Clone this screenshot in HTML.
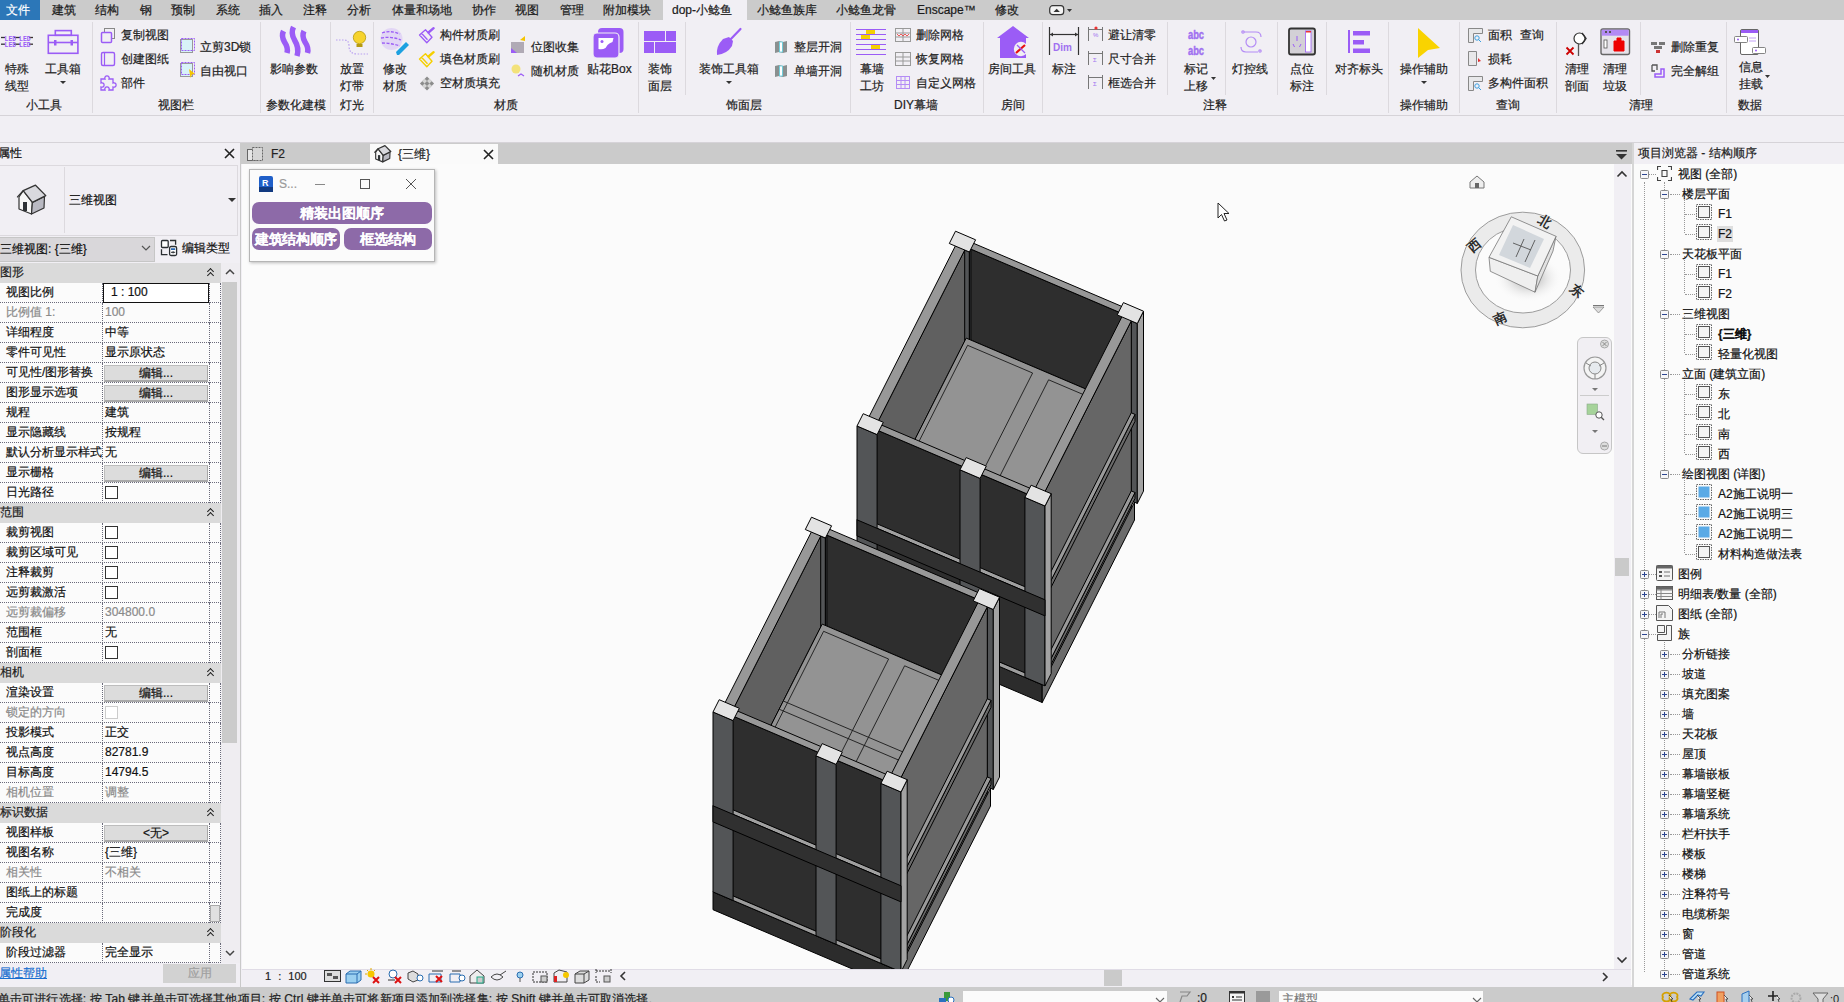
<!DOCTYPE html>
<html><head><meta charset="utf-8">
<style>
*{margin:0;padding:0;box-sizing:border-box}
html,body{width:1844px;height:1002px;overflow:hidden;background:#f1eff4;font-family:"Liberation Sans",sans-serif;font-size:12px;color:#111;-webkit-text-stroke:0.2px currentColor}
.a{position:absolute;white-space:nowrap}
#tabs{position:absolute;left:0;top:0;width:1844px;height:20px;background:#cbcbcb}
#tabs .t{position:absolute;top:0;height:20px;line-height:20px;font-size:12px;color:#1a1a1a}
#ribbon{position:absolute;left:0;top:20px;width:1844px;height:96px;background:#f1eff4}
.sep{position:absolute;top:2px;width:1px;height:91px;background:#dcd9de}
.gl{position:absolute;top:77px;height:16px;line-height:16px;font-size:12px;color:#222;white-space:nowrap}
.lb{position:absolute;font-size:12px;color:#222;white-space:nowrap;line-height:16px}

.ph{position:absolute;left:0;width:221px;height:20px;background:#dadada;line-height:19px;font-size:12px;color:#222;padding-left:0;white-space:nowrap}
.ph .cc{position:absolute;left:207px;top:5px;width:7px;height:10px}
.ph .cc:before,.ph .cc:after{content:"";position:absolute;left:1px;width:4px;height:4px;border-left:1.5px solid #222;border-top:1.5px solid #222;transform:rotate(45deg)}
.ph .cc:before{top:1px}.ph .cc:after{top:5px}
.pr{position:absolute;left:0;width:221px;height:20px;background:#fbfbfb;font-size:12px;color:#111;white-space:nowrap;border-bottom:1px dotted #6a6a7a}
.pr:after{content:"";position:absolute;left:102px;top:0;width:106px;height:20px;border-left:1px dotted #6a6a7a;border-right:1px dotted #6a6a7a}
.pr:before{content:"";position:absolute;left:220px;top:0;height:20px;border-left:1px dotted #6a6a7a}
.pn{position:absolute;left:6px;top:0;line-height:19px}
.pv{position:absolute;left:105px;top:0;line-height:19px}
.pbox{position:absolute;left:103px;top:0;width:106px;height:20px;border:1.5px solid #111;background:#fff;line-height:17px;padding-left:7px;z-index:2}
.pbtn{position:absolute;left:104px;top:2px;width:104px;height:17px;background:#dcdcdc;border:1px solid #bdbdbd;border-right-color:#a8a8a8;border-bottom:2px solid #a8a8a8;text-align:center;line-height:15px;z-index:2}
.pcb{position:absolute;left:105px;top:3px;width:13px;height:13px;border:1px solid #333;background:#fff;z-index:2}
.psm{position:absolute;left:210px;top:2px;width:10px;height:17px;background:#e0e0e0;border:1px solid #aaa;z-index:2}

.tb{position:absolute;width:9px;height:9px;border:1px solid #8a8a8a;background:#f6f6f8;border-radius:1.5px}
.tb .h{position:absolute;left:1px;top:3px;width:5px;height:1.3px;background:#2c4690}
.tb .v{position:absolute;left:3px;top:1px;width:1.3px;height:5px;background:#2c4690}
.dh{position:absolute;height:1px;border-top:1px dotted #999}
.dv{position:absolute;width:1px;border-left:1px dotted #999}
.tt{position:absolute;line-height:16px;font-size:12px;color:#111;white-space:nowrap}
.dbtn{background:#8d6aa8;border-radius:7px;color:#fff;font-weight:bold;font-size:14px;text-align:center;line-height:22px;overflow:hidden;-webkit-text-stroke:0.05px #fff}
</style></head><body>
<div id="tabs">
 <div class="a" style="left:0;top:0;width:40px;height:20px;background:#2c77b8"></div>
 <div class="t" style="left:6px;color:#fff">文件</div>
 <div class="t" style="left:52px">建筑</div>
 <div class="t" style="left:95px">结构</div>
 <div class="t" style="left:140px">钢</div>
 <div class="t" style="left:171px">预制</div>
 <div class="t" style="left:216px">系统</div>
 <div class="t" style="left:259px">插入</div>
 <div class="t" style="left:303px">注释</div>
 <div class="t" style="left:347px">分析</div>
 <div class="t" style="left:392px">体量和场地</div>
 <div class="t" style="left:472px">协作</div>
 <div class="t" style="left:515px">视图</div>
 <div class="t" style="left:560px">管理</div>
 <div class="t" style="left:603px">附加模块</div>
 <div class="a" style="left:663px;top:0;width:84px;height:20px;background:#f1eff4"></div>
 <div class="t" style="left:672px">dop-小鲶鱼</div>
 <div class="t" style="left:757px">小鲶鱼族库</div>
 <div class="t" style="left:836px">小鲶鱼龙骨</div>
 <div class="t" style="left:917px">Enscape™</div>
 <div class="t" style="left:995px">修改</div>
 <svg class="a" style="left:1049px;top:4px" width="24" height="12"><rect x="0.7" y="1.7" width="14" height="9" rx="3" fill="#f4f4f4" stroke="#333" stroke-width="1.2"/><path d="M4.5 8 l3.2 -3.2 l3.2 3.2z" fill="#333"/><path d="M18 5 h5 l-2.5 3z" fill="#333"/></svg>
</div>
<div id="ribbon"></div>
<svg class="a" style="left:0;top:0" width="1844" height="116" viewBox="0 0 1844 116">
<g fill="none" stroke="#9b5cf6" stroke-width="1.6">
 <!-- toolbox -->
 <rect x="48.3" y="35.3" width="29.6" height="18" />
 <rect x="55.3" y="30.6" width="16" height="4.7" />
 <line x1="48.3" y1="42.5" x2="77.9" y2="42.5"/>
</g>
<rect x="54" y="40" width="2.5" height="5.5" fill="#9b5cf6"/><rect x="70.5" y="40" width="2.5" height="5.5" fill="#9b5cf6"/>
<path d="M60 81 h6 l-3 3z" fill="#333"/>
<!-- LED lines -->
<g stroke="#333" stroke-width="1.3"><line x1="1" y1="37.5" x2="5" y2="37.5"/><line x1="14" y1="37.5" x2="20" y2="37.5"/><line x1="29" y1="37.5" x2="33" y2="37.5"/>
<line x1="1" y1="44.2" x2="5" y2="44.2"/><line x1="14" y1="44.2" x2="20" y2="44.2"/><line x1="29" y1="44.2" x2="33" y2="44.2"/></g>
<g font-family="Liberation Mono" font-size="6.5" fill="#9b5cf6" font-weight="bold"><text x="4.5" y="40.5">LED</text><text x="19" y="40.5">LED</text><text x="4.5" y="47.3">LED</text><text x="19" y="47.3">LED</text></g>
<!-- copy view -->
<rect x="104.5" y="28.5" width="10" height="10" fill="none" stroke="#888" stroke-width="1"/>
<rect x="101.5" y="32.5" width="10" height="10" rx="1" fill="#f1eff4" stroke="#9b5cf6" stroke-width="1.5"/>
<!-- sheet -->
<rect x="101.5" y="52.5" width="13" height="13" rx="1.5" fill="none" stroke="#9b5cf6" stroke-width="1.4"/>
<line x1="104.5" y1="52.5" x2="104.5" y2="65.5" stroke="#9b5cf6" stroke-width="1.2"/>
<!-- puzzle -->
<path d="M101 79 h4 a2.2 2.2 0 1 1 4 0 h4 v4 a2.2 2.2 0 1 1 0 4 v3 h-4 a2.2 2.2 0 1 0 -4 0 h-4 v-3 a2.2 2.2 0 1 0 0 -4z" fill="none" stroke="#9b5cf6" stroke-width="1.3"/>
<!-- 3d lock / free view -->
<rect x="180.5" y="39.5" width="12" height="13" fill="#d8f3f8" stroke="#999" stroke-width="1"/>
<rect x="181.5" y="38.5" width="13" height="12" fill="none" stroke="#9b5cf6" stroke-width="1" stroke-dasharray="2 1"/>
<rect x="180.5" y="63.5" width="12" height="13" fill="#d8f3f8" stroke="#999" stroke-width="1"/>
<rect x="181.5" y="62.5" width="13" height="12" fill="none" stroke="#9b5cf6" stroke-width="1" stroke-dasharray="2 1"/>
<path d="M189 69 l6 5 l-3 0.5 l-1.5 3.5z" fill="#f5c400"/>
<!-- steem S strokes -->
<g fill="none" stroke="#9b5cf6" stroke-width="5.5" stroke-linecap="butt">
<path d="M283.5 31 q-2.5 5 1 11 q4 6 2.5 11"/>
<path d="M293.5 27 q-3 6 1 13 q5 8 2.5 16"/>
<path d="M304 31 q-2.5 5 1 11 q4 6 2.5 11"/>
</g>
<!-- bulb -->
<path d="M336 40 h8 q5 0 5 6 q0 8 8 8 h11" fill="none" stroke="#b9a0f0" stroke-width="1.2" stroke-dasharray="1.5 1.5"/>
<circle cx="359.5" cy="37.5" r="6.2" fill="#f6d32d" stroke="#b59a10" stroke-width="0.8"/>
<rect x="356.5" y="44" width="6" height="3" fill="#b59a10"/>
<!-- material ball -->
<circle cx="391.5" cy="39" r="11" fill="#e2d6f5"/>
<g fill="none" stroke="#9b5cf6" stroke-width="1.3" stroke-dasharray="3 1.5"><path d="M382 33 q9 -3 18 1"/><path d="M381 38 q10 -2 20 2"/><path d="M382 43 q9 0 18 3"/></g>
<path d="M397 55 l-1 -3 l10 -10 l3 3 l-10 10z" fill="#1da1e0"/>
<!-- brushes -->
<g fill="none" stroke-linejoin="round">
<path d="M419.5 35 L425.5 29.8 L432 37.2 L426.8 42.8 Z M421.5 33.3 l6 6.5" stroke="#9b5cf6" stroke-width="1.3"/>
<path d="M428.5 32.5 L433.6 28.2" stroke="#9b5cf6" stroke-width="2.4" stroke-linecap="round"/>
<path d="M419.5 59 L425.5 53.8 L432 61.2 L426.8 66.8 Z M421.5 57.3 l6 6.5" stroke="#f5cf00" stroke-width="1.4"/>
<path d="M428.5 56.5 L433.6 52.2" stroke="#f5cf00" stroke-width="2.4" stroke-linecap="round"/>
</g>
<g transform="rotate(45 427 83.5)"><rect x="422" y="78.5" width="10" height="10" fill="#8c8c8c"/><rect x="425.3" y="78.5" width="3.4" height="3.3" fill="#d6d6d6"/><rect x="422" y="81.8" width="3.3" height="3.4" fill="#d6d6d6"/><rect x="428.7" y="81.8" width="3.3" height="3.4" fill="#d6d6d6"/><rect x="425.3" y="85.2" width="3.4" height="3.3" fill="#d6d6d6"/></g>
<!-- bitmap collect -->
<rect x="511" y="42" width="13" height="11" fill="#b0aab5"/><path d="M511 53 v-5 l6 5z" fill="#9b5cf6"/><path d="M520 40 l5 -4 v5z" fill="#f5c400"/>
<!-- random material -->
<circle cx="516" cy="69" r="4.5" fill="#f3e27a"/><path d="M518 76 l3 -2 l3 2" fill="none" stroke="#9b5cf6" stroke-width="1.2"/>
<!-- decal box -->
<rect x="598" y="28" width="25.5" height="25" rx="4" fill="#9b5cf6"/>
<rect x="593" y="33" width="26" height="25" rx="4" fill="#9b5cf6" stroke="#f1eff4" stroke-width="1.2"/>
<path d="M598.5 38 h15 l-1 4 q-3 1 -5 3 l-2 3 q-3 2 -7 1z" fill="#fff"/>
<circle cx="602" cy="41.5" r="1.5" fill="#9b5cf6"/>
<!-- bricks -->
<g fill="#9b5cf6"><rect x="644" y="31" width="21" height="10"/><rect x="666" y="31" width="10" height="10"/><rect x="644" y="42" width="10" height="11"/><rect x="655" y="42" width="21" height="11"/></g>
<!-- trowel -->
<path d="M717 55 q-1 -9 6 -16 l6 -2 l4 4 l-1 5 q-5 8 -15 9z" fill="#9b5cf6"/>
<line x1="728" y1="42" x2="740.5" y2="29" stroke="#9b5cf6" stroke-width="2.2" stroke-linecap="round"/>
<path d="M726 81 h6 l-3 3z" fill="#333"/>
<!-- openings -->
<g><path d="M775 42 l4 -1 l4 1 l4 -1 v11 l-4 1 l-4 -1 l-4 1z" fill="#8a9090"/><rect x="779.5" y="42" width="3" height="10" fill="#fff" stroke="#5fd0e0" stroke-width="0.8"/></g>
<g><path d="M775 66 l4 -1 l4 1 l4 -1 v11 l-4 1 l-4 -1 l-4 1z" fill="#8a9090"/><rect x="779.5" y="66" width="3" height="10" fill="#fff" stroke="#5fd0e0" stroke-width="0.8"/></g>
<!-- curtain wall workshop -->
<g stroke="#9b5cf6" stroke-width="1"><line x1="856" y1="29.5" x2="886" y2="29.5"/><line x1="856" y1="34.5" x2="886" y2="34.5"/><line x1="856" y1="39.5" x2="886" y2="39.5"/><line x1="856" y1="44.5" x2="886" y2="44.5"/><line x1="856" y1="49.5" x2="886" y2="49.5"/><line x1="856" y1="54.5" x2="886" y2="54.5"/></g>
<g fill="#f5d000"><rect x="866" y="30" width="9" height="4"/><rect x="861" y="35" width="9" height="4"/><rect x="871" y="45" width="9" height="4"/></g>
<!-- grid icons -->
<g fill="none" stroke="#999" stroke-width="1"><rect x="895.5" y="28.5" width="15" height="13"/><line x1="895.5" y1="33" x2="910.5" y2="33"/><line x1="895.5" y1="37" x2="910.5" y2="37"/><line x1="903" y1="28.5" x2="903" y2="41.5"/>
<rect x="895.5" y="52.5" width="15" height="13"/><line x1="895.5" y1="57" x2="910.5" y2="57"/><line x1="895.5" y1="61" x2="910.5" y2="61"/><line x1="903" y1="52.5" x2="903" y2="65.5"/></g>
<path d="M897 34 l2 2 l2 -2 l2 2 l2 -2 l2 2 l2 -2" fill="none" stroke="#e33" stroke-width="0.8"/>
<g fill="none" stroke="#b48cf5" stroke-width="1"><rect x="896.5" y="76.5" width="13" height="12"/><line x1="896.5" y1="80.5" x2="909.5" y2="80.5"/><line x1="896.5" y1="84.5" x2="909.5" y2="84.5"/><line x1="901" y1="76.5" x2="901" y2="88.5"/><line x1="905" y1="76.5" x2="905" y2="88.5"/></g>
<!-- room tool house -->
<path d="M1013 26 l16 12 h-3 v20 h-26 v-20 h-3z" fill="#9b5cf6"/>
<circle cx="1021" cy="49" r="7.2" fill="#f1eff4"/>
<path d="M1016 53 l9 -8" stroke="#e81010" stroke-width="2.2"/><path d="M1017 45 l8 8" stroke="#9b5cf6" stroke-width="1.2"/>
<!-- Dim -->
<g stroke="#333" stroke-width="1.2"><line x1="1049.5" y1="27" x2="1049.5" y2="55"/><line x1="1078.5" y1="27" x2="1078.5" y2="55"/><line x1="1050" y1="34.5" x2="1078" y2="34.5"/></g>
<path d="M1050 34.5 l3 -2 v4z M1078 34.5 l-3 -2 v4z" fill="#333"/>
<text x="1053" y="51" font-family="Liberation Sans" font-weight="bold" font-size="10" fill="#a070f0">Dim</text>
<!-- small dim icons -->
<g stroke="#777" stroke-width="1"><line x1="1088.5" y1="27" x2="1088.5" y2="41"/><line x1="1102.5" y1="27" x2="1102.5" y2="41"/><line x1="1088.5" y1="29.5" x2="1102.5" y2="29.5"/>
<line x1="1088.5" y1="51" x2="1088.5" y2="65"/><line x1="1102.5" y1="51" x2="1102.5" y2="65"/><line x1="1088.5" y1="53.5" x2="1102.5" y2="53.5"/>
<line x1="1088.5" y1="75" x2="1088.5" y2="89"/><line x1="1102.5" y1="75" x2="1102.5" y2="89"/><line x1="1088.5" y1="77.5" x2="1102.5" y2="77.5"/></g>
<circle cx="1096" cy="28" r="1.6" fill="#e33"/>
<g font-family="Liberation Sans" font-size="6" fill="#a070f0"><text x="1093" y="62">Σ</text><text x="1093" y="86">Σ</text><text x="1093" y="37">%</text></g>
<!-- abc abc -->
<g font-family="Liberation Sans" font-weight="bold" font-size="12" fill="#a070f0" stroke="#a070f0" stroke-width="0.4" transform="scale(0.78,1)"><text x="1523" y="39.5">abc</text><text x="1523" y="55.5">abc</text></g>
<path d="M1211 77 h5 l-2.5 3z" fill="#333"/>
<!-- light control -->
<g fill="none" stroke="#b48cf5" stroke-width="1.2"><circle cx="1251" cy="42" r="5"/><path d="M1244 32 h12 q5 0 5 5 M1258 52 h-12 q-5 0 -5 -5"/><circle cx="1243" cy="32" r="1.2"/><circle cx="1260" cy="51" r="1.2"/></g>
<!-- point label -->
<rect x="1289" y="28.5" width="26" height="26" rx="2" fill="#d3d0d6" stroke="#333" stroke-width="1.8"/>
<rect x="1305.5" y="31" width="5.5" height="21" fill="#fff" stroke="#9b5cf6" stroke-width="0.8"/><rect x="1306" y="31" width="5" height="1.5" fill="#e33"/>
<g stroke="#9b5cf6" stroke-width="1"><line x1="1297" y1="36" x2="1297" y2="41"/><line x1="1293" y1="44" x2="1294.5" y2="47"/><line x1="1301" y1="44" x2="1299.5" y2="47"/></g>
<!-- align heads -->
<rect x="1348" y="30" width="2" height="23" fill="#9b5cf6"/>
<g fill="#9b5cf6"><rect x="1353" y="31" width="17" height="4.5"/><rect x="1353" y="40" width="11" height="4.5"/><rect x="1353" y="48.5" width="17" height="4.5"/></g>
<!-- yellow arrow -->
<path d="M1418 28 l22 20 l-12 2 l-10 8z" fill="#f9d300"/>
<path d="M1421 81 h6 l-3 3z" fill="#333"/>
<!-- area query icons -->
<g fill="#e8e8ea" stroke="#888" stroke-width="1"><path d="M1468.5 28.5 h14 v5 h-9 v9 h-5z"/><path d="M1468.5 51.5 h8 v14 h-8z"/><path d="M1468.5 76.5 h14 v5 h-9 v9 h-5z"/></g>
<g fill="none" stroke="#3aa0e0" stroke-width="1"><circle cx="1477" cy="38" r="2.2"/><line x1="1478.5" y1="39.5" x2="1481" y2="42"/><circle cx="1477" cy="86" r="2.2"/><line x1="1478.5" y1="87.5" x2="1481" y2="90"/></g>
<path d="M1478 58 l3 3 l-3 1z" fill="#d33"/>
<!-- clean section -->
<circle cx="1579.5" cy="38.5" r="5.5" fill="#fff" stroke="#333" stroke-width="1.2"/>
<path d="M1582 33 l4 5.5 l-4 5.5" fill="none" stroke="#333" stroke-width="1.4"/>
<line x1="1578.5" y1="44" x2="1578.5" y2="56" stroke="#555" stroke-width="1.3"/>
<path d="M1566.5 47.5 l7 7 M1573.5 47.5 l-7 7" stroke="#c00" stroke-width="1.8"/>
<!-- clean garbage -->
<rect x="1601" y="29" width="28.5" height="25.5" rx="2" fill="#e6e3ea" stroke="#666" stroke-width="1.4"/>
<rect x="1601.7" y="29.7" width="27" height="6" fill="#b38af5"/>
<rect x="1605" y="31" width="2" height="2" fill="#555"/><rect x="1609" y="31" width="2" height="2" fill="#555"/>
<rect x="1604" y="40" width="3" height="8" fill="#fff" stroke="#555" stroke-width="0.8"/>
<path d="M1614 41 h10 v10 h-10z M1617 41 v-3 h4 v3" fill="#e00" stroke="#e00" stroke-width="1"/>
<!-- delete dup / ungroup -->
<g fill="#777"><rect x="1651" y="42" width="6" height="3"/><rect x="1659" y="42" width="6" height="3"/><rect x="1654" y="46" width="8" height="3"/></g><rect x="1656" y="50" width="4" height="3" fill="#c33"/>
<path d="M1652 65 h5 v5 M1652 65 v6 h3" fill="none" stroke="#555" stroke-width="1.3"/><path d="M1664 69 v8 h-9 v-3 h6 v-5z" fill="none" stroke="#9b5cf6" stroke-width="1.5"/>
<!-- info mount -->
<rect x="1740.5" y="29.5" width="18" height="25" rx="1.5" fill="#fff" stroke="#666" stroke-width="1"/>
<rect x="1741" y="30" width="17" height="3" fill="#9b5cf6"/>
<g stroke="#b48cf5" stroke-width="0.8"><line x1="1749" y1="38" x2="1756" y2="38"/><line x1="1749" y1="41" x2="1756" y2="41"/></g>
<rect x="1734.5" y="36.5" width="13" height="6" rx="1" fill="#fff" stroke="#777" stroke-width="0.9"/><circle cx="1738" cy="39.5" r="1" fill="#9b5cf6"/>
<rect x="1752.5" y="47.5" width="13" height="6" rx="1" fill="#fff" stroke="#777" stroke-width="0.9"/><circle cx="1756" cy="50.5" r="1" fill="#9b5cf6"/>
<path d="M1765 75 h5 l-2.5 3z" fill="#333"/>
</svg>
<div id="ribbon2" class="a" style="left:0;top:20px;width:1844px;height:96px">
<!-- separators (x absolute) -->
<div class="sep" style="left:92px"></div>
<div class="sep" style="left:260px"></div>
<div class="sep" style="left:330px"></div>
<div class="sep" style="left:373px"></div>
<div class="sep" style="left:638px"></div>
<div class="sep" style="left:685px;height:73px"></div>
<div class="sep" style="left:850px"></div>
<div class="sep" style="left:983px"></div>
<div class="sep" style="left:1042px"></div>
<div class="sep" style="left:1167px;height:73px"></div>
<div class="sep" style="left:1225px;height:73px"></div>
<div class="sep" style="left:1277px;height:73px"></div>
<div class="sep" style="left:1326px;height:73px"></div>
<div class="sep" style="left:1388px"></div>
<div class="sep" style="left:1459px"></div>
<div class="sep" style="left:1556px"></div>
<div class="sep" style="left:1640px;height:73px"></div>
<div class="sep" style="left:1726px"></div>
<!-- group labels -->
<div class="gl" style="left:26px">小工具</div>
<div class="gl" style="left:158px">视图栏</div>
<div class="gl" style="left:266px">参数化建模</div>
<div class="gl" style="left:340px">灯光</div>
<div class="gl" style="left:494px">材质</div>
<div class="gl" style="left:726px">饰面层</div>
<div class="gl" style="left:894px">DIY幕墙</div>
<div class="gl" style="left:1001px">房间</div>
<div class="gl" style="left:1203px">注释</div>
<div class="gl" style="left:1400px">操作辅助</div>
<div class="gl" style="left:1496px">查询</div>
<div class="gl" style="left:1629px">清理</div>
<div class="gl" style="left:1738px">数据</div>
<!-- big button labels -->
<div class="lb" style="left:5px;top:41px">特殊</div>
<div class="lb" style="left:5px;top:58px">线型</div>
<div class="lb" style="left:45px;top:41px">工具箱</div>
<div class="lb" style="left:270px;top:41px">影响参数</div>
<div class="lb" style="left:340px;top:41px">放置</div>
<div class="lb" style="left:340px;top:58px">灯带</div>
<div class="lb" style="left:383px;top:41px">修改</div>
<div class="lb" style="left:383px;top:58px">材质</div>
<div class="lb" style="left:587px;top:41px">贴花Box</div>
<div class="lb" style="left:648px;top:41px">装饰</div>
<div class="lb" style="left:648px;top:58px">面层</div>
<div class="lb" style="left:699px;top:41px">装饰工具箱</div>
<div class="lb" style="left:860px;top:41px">幕墙</div>
<div class="lb" style="left:860px;top:58px">工坊</div>
<div class="lb" style="left:988px;top:41px">房间工具</div>
<div class="lb" style="left:1052px;top:41px">标注</div>
<div class="lb" style="left:1184px;top:41px">标记</div>
<div class="lb" style="left:1184px;top:58px">上移</div>
<div class="lb" style="left:1232px;top:41px">灯控线</div>
<div class="lb" style="left:1290px;top:41px">点位</div>
<div class="lb" style="left:1290px;top:58px">标注</div>
<div class="lb" style="left:1335px;top:41px">对齐标头</div>
<div class="lb" style="left:1400px;top:41px">操作辅助</div>
<div class="lb" style="left:1565px;top:41px">清理</div>
<div class="lb" style="left:1565px;top:58px">剖面</div>
<div class="lb" style="left:1603px;top:41px">清理</div>
<div class="lb" style="left:1603px;top:58px">垃圾</div>
<div class="lb" style="left:1739px;top:39px">信息</div>
<div class="lb" style="left:1739px;top:56px">挂载</div>
<!-- small button labels -->
<div class="lb" style="left:121px;top:7px">复制视图</div>
<div class="lb" style="left:121px;top:31px">创建图纸</div>
<div class="lb" style="left:121px;top:55px">部件</div>
<div class="lb" style="left:200px;top:19px">立剪3D锁</div>
<div class="lb" style="left:200px;top:43px">自由视口</div>
<div class="lb" style="left:440px;top:7px">构件材质刷</div>
<div class="lb" style="left:440px;top:31px">填色材质刷</div>
<div class="lb" style="left:440px;top:55px">空材质填充</div>
<div class="lb" style="left:531px;top:19px">位图收集</div>
<div class="lb" style="left:531px;top:43px">随机材质</div>
<div class="lb" style="left:794px;top:19px">整层开洞</div>
<div class="lb" style="left:794px;top:43px">单墙开洞</div>
<div class="lb" style="left:916px;top:7px">删除网格</div>
<div class="lb" style="left:916px;top:31px">恢复网格</div>
<div class="lb" style="left:916px;top:55px">自定义网格</div>
<div class="lb" style="left:1108px;top:7px">避让清零</div>
<div class="lb" style="left:1108px;top:31px">尺寸合并</div>
<div class="lb" style="left:1108px;top:55px">框选合并</div>
<div class="lb" style="left:1488px;top:7px">面积</div>
<div class="lb" style="left:1520px;top:7px">查询</div>
<div class="lb" style="left:1488px;top:31px">损耗</div>
<div class="lb" style="left:1488px;top:55px">多构件面积</div>
<div class="lb" style="left:1671px;top:19px">删除重复</div>
<div class="lb" style="left:1671px;top:43px">完全解组</div>
</div>
<div class="a" style="left:0;top:115px;width:1844px;height:1px;background:#d6d3d8"></div>
<div class="a" style="left:0;top:142px;width:1844px;height:1px;background:#d6d3d8"></div>
<!-- properties -->
<div id="props" class="a" style="left:0;top:143px;width:240px;height:844px;background:#f1eff4"></div>
<div class="a" style="left:240px;top:143px;width:1px;height:844px;background:#c9c9c9"></div>
<div class="a" style="left:-2px;top:143px;height:20px;line-height:20px">属性</div>
<svg class="a" style="left:224px;top:148px" width="11" height="11"><path d="M1 1 L10 10 M10 1 L1 10" stroke="#222" stroke-width="1.6"/></svg>
<div class="a" style="left:0;top:165px;width:238px;height:71px;border:1px solid #dcd9de;border-left:none"></div>
<div class="a" style="left:0;top:167px;width:65px;height:66px;border-right:1px solid #dcd9de"></div>
<svg class="a" style="left:16px;top:184px" width="32" height="32"><polygon points="3,13 7.2,6.7 16.4,18.4 15.5,30 3,25" fill="#f6f6f6" stroke="#333" stroke-width="1.2" stroke-linejoin="round"/><polygon points="16.4,18.4 28.5,12.5 28,24 15.5,30" fill="#b9b9c2" stroke="#333" stroke-width="1.2" stroke-linejoin="round"/><polygon points="1.5,12.9 7.2,6.7 19.5,1.2 29.8,11.6 16.4,18.4 7.2,6.7" fill="#d9d9de" stroke="#333" stroke-width="1.3" stroke-linejoin="round"/><rect x="7" y="18" width="4" height="9" fill="#2e3236"/></svg>
<div class="a" style="left:69px;top:192px;line-height:16px">三维视图</div>
<svg class="a" style="left:228px;top:198px" width="9" height="5"><path d="M0 0 h8 l-4 4z" fill="#333"/></svg>
<div class="a" style="left:0;top:237px;width:155px;height:25px;background:#d9d7da;border:1px solid #c6c6c6;border-left:none"></div>
<div class="a" style="left:0;top:241px;line-height:16px">三维视图: {三维}</div>
<svg class="a" style="left:141px;top:245px" width="10" height="6"><path d="M1 1 l4 4 l4 -4" fill="none" stroke="#555" stroke-width="1.2"/></svg>
<svg class="a" style="left:160px;top:239px" width="18" height="18"><rect x="1.5" y="1.5" width="6.7" height="7" rx="1" fill="#fff" stroke="#2a2e32" stroke-width="1.3"/><path d="M10 1.5 h5.6 v4.2 M1.5 10.3 v5.4 h6" fill="none" stroke="#2a2e32" stroke-width="1.3"/><rect x="9.6" y="7.5" width="7" height="9" rx="1.5" fill="#fff" stroke="#2a2e32" stroke-width="1.3"/><rect x="11" y="9.3" width="4.2" height="1.6" fill="#1155aa"/><path d="M11 13.3 h4.2 M13.1 12.2 v2.2" stroke="#2a2e32" stroke-width="1"/></svg>
<div class="a" style="left:182px;top:240px;line-height:16px">编辑类型</div>
<div class="ph" style="top:263px">图形<span class="cc"></span></div>
<div class="pr" style="top:283px"><div class="pn">视图比例</div>
<div class="pbox">1 : 100</div>
</div>
<div class="pr" style="top:303px"><div class="pn" style="color:#8a8a8a">比例值 1:</div>
<div class="pv" style="color:#8a8a8a">100</div>
</div>
<div class="pr" style="top:323px"><div class="pn">详细程度</div>
<div class="pv">中等</div>
</div>
<div class="pr" style="top:343px"><div class="pn">零件可见性</div>
<div class="pv">显示原状态</div>
</div>
<div class="pr" style="top:363px"><div class="pn">可见性/图形替换</div>
<div class="pbtn">编辑...</div>
</div>
<div class="pr" style="top:383px"><div class="pn">图形显示选项</div>
<div class="pbtn">编辑...</div>
</div>
<div class="pr" style="top:403px"><div class="pn">规程</div>
<div class="pv">建筑</div>
</div>
<div class="pr" style="top:423px"><div class="pn">显示隐藏线</div>
<div class="pv">按规程</div>
</div>
<div class="pr" style="top:443px"><div class="pn">默认分析显示样式</div>
<div class="pv">无</div>
</div>
<div class="pr" style="top:463px"><div class="pn">显示栅格</div>
<div class="pbtn">编辑...</div>
</div>
<div class="pr" style="top:483px"><div class="pn">日光路径</div>
<div class="pcb"></div>
</div>
<div class="ph" style="top:503px">范围<span class="cc"></span></div>
<div class="pr" style="top:523px"><div class="pn">裁剪视图</div>
<div class="pcb"></div>
</div>
<div class="pr" style="top:543px"><div class="pn">裁剪区域可见</div>
<div class="pcb"></div>
</div>
<div class="pr" style="top:563px"><div class="pn">注释裁剪</div>
<div class="pcb"></div>
</div>
<div class="pr" style="top:583px"><div class="pn">远剪裁激活</div>
<div class="pcb"></div>
</div>
<div class="pr" style="top:603px"><div class="pn" style="color:#8a8a8a">远剪裁偏移</div>
<div class="pv" style="color:#8a8a8a">304800.0</div>
</div>
<div class="pr" style="top:623px"><div class="pn">范围框</div>
<div class="pv">无</div>
</div>
<div class="pr" style="top:643px"><div class="pn">剖面框</div>
<div class="pcb"></div>
</div>
<div class="ph" style="top:663px">相机<span class="cc"></span></div>
<div class="pr" style="top:683px"><div class="pn">渲染设置</div>
<div class="pbtn">编辑...</div>
</div>
<div class="pr" style="top:703px"><div class="pn" style="color:#8a8a8a">锁定的方向</div>
<div class="pcb" style="border-color:#ccc"></div>
</div>
<div class="pr" style="top:723px"><div class="pn">投影模式</div>
<div class="pv">正交</div>
</div>
<div class="pr" style="top:743px"><div class="pn">视点高度</div>
<div class="pv">82781.9</div>
</div>
<div class="pr" style="top:763px"><div class="pn">目标高度</div>
<div class="pv">14794.5</div>
</div>
<div class="pr" style="top:783px"><div class="pn" style="color:#8a8a8a">相机位置</div>
<div class="pv" style="color:#8a8a8a">调整</div>
</div>
<div class="ph" style="top:803px">标识数据<span class="cc"></span></div>
<div class="pr" style="top:823px"><div class="pn">视图样板</div>
<div class="pbtn">&lt;无&gt;</div>
</div>
<div class="pr" style="top:843px"><div class="pn">视图名称</div>
<div class="pv">{三维}</div>
</div>
<div class="pr" style="top:863px"><div class="pn" style="color:#8a8a8a">相关性</div>
<div class="pv" style="color:#8a8a8a">不相关</div>
</div>
<div class="pr" style="top:883px"><div class="pn">图纸上的标题</div>
<div class="pv"></div>
</div>
<div class="pr" style="top:903px"><div class="pn">完成度</div>
<div class="psm"></div>
</div>
<div class="ph" style="top:923px">阶段化<span class="cc"></span></div>
<div class="pr" style="top:943px"><div class="pn">阶段过滤器</div>
<div class="pv">完全显示</div>
</div>
<div class="a" style="left:221px;top:263px;width:19px;height:700px;background:#efedf1"></div>
<div class="a" style="left:222px;top:282px;width:15px;height:461px;background:#cbcbcb"></div>
<svg class="a" style="left:225px;top:268px" width="10" height="7"><path d="M1 6 l4 -4 l4 4" fill="none" stroke="#444" stroke-width="1.5"/></svg>
<svg class="a" style="left:225px;top:950px" width="10" height="7"><path d="M1 1 l4 4 l4 -4" fill="none" stroke="#444" stroke-width="1.5"/></svg>
<div class="a" style="left:-1px;top:965px;line-height:16px;color:#1a6fd0;text-decoration:underline">属性帮助</div>
<div class="a" style="left:163px;top:964px;width:73px;height:19px;background:#d2d2d2;color:#a0a0a0;text-align:center;line-height:19px">应用</div>
<!-- view tabs -->
<div class="a" style="left:240px;top:143px;width:1393px;height:21px;background:#cbcbcb"></div>
<div class="a" style="left:370px;top:144px;width:128px;height:20px;background:#fafafa"></div>
<svg class="a" style="left:247px;top:147px" width="17" height="15"><rect x="0.5" y="2.5" width="10" height="11" fill="#e6e6e6" stroke="#666"/><rect x="5.5" y="0.5" width="10" height="13" fill="#d6d6d6" stroke="#666" stroke-dasharray="2 1"/></svg>
<div class="a" style="left:271px;top:146px;line-height:16px;color:#222">F2</div>
<svg class="a" style="left:374px;top:145px" width="18" height="18" viewBox="0 0 32 32"><polygon points="3,13 7.2,6.7 16.4,18.4 15.5,30 3,25" fill="#f6f6f6" stroke="#333" stroke-width="2" stroke-linejoin="round"/><polygon points="16.4,18.4 28.5,12.5 28,24 15.5,30" fill="#b9b9c2" stroke="#333" stroke-width="2" stroke-linejoin="round"/><polygon points="1.5,12.9 7.2,6.7 19.5,1.2 29.8,11.6 16.4,18.4 7.2,6.7" fill="#d9d9de" stroke="#333" stroke-width="2.2" stroke-linejoin="round"/><rect x="7" y="18" width="4" height="9" fill="#2e3236"/></svg>
<div class="a" style="left:398px;top:146px;line-height:16px;color:#222">{三维}</div>
<svg class="a" style="left:483px;top:149px" width="11" height="11"><path d="M1 1 L10 10 M10 1 L1 10" stroke="#222" stroke-width="1.6"/></svg>
<svg class="a" style="left:1614px;top:149px" width="16" height="12"><rect x="2" y="1" width="11" height="1.6" fill="#333"/><path d="M2 5 h11 l-5.5 5.5z" fill="#333"/></svg>
<!-- viewport -->
<div class="a" style="left:242px;top:164px;width:1391px;height:821px;background:#fbfbfb"></div>
<!--BOXES--><svg class="a" style="left:0;top:0" width="1844" height="1002" viewBox="0 0 1844 1002">
<defs><clipPath id="vpclip"><rect x="242" y="164" width="1372" height="805"/></clipPath></defs>
<g clip-path="url(#vpclip)">
<polygon points="877.2,514.1 966.2,338.1 966.2,247.1 877.2,423.2" fill="#606060" stroke="#000" stroke-width="1.0" stroke-linejoin="round"/>
<polygon points="966.2,338.1 1123.3,405.0 1123.3,314.0 966.2,247.1" fill="#2e2e2e" stroke="#000" stroke-width="1.0" stroke-linejoin="round"/>
<polygon points="964.7,341.0 969.4,343.0 969.4,252.0 964.7,250.0" fill="#535557" stroke="#000" stroke-width="1.0" stroke-linejoin="round"/>
<polygon points="969.4,343.0 970.9,340.1 970.9,249.1 969.4,252.0" fill="#535557" stroke="#000" stroke-width="1.0" stroke-linejoin="round"/>
<polygon points="877.2,514.1 1034.3,581.0 1123.3,405.0 966.2,338.1" fill="#939393" stroke="#000" stroke-width="1.0" stroke-linejoin="round"/>
<line x1="881.3" y1="515.9" x2="967.6" y2="345.3" stroke="#1a1a1a" stroke-width="0.9"/>
<line x1="967.6" y1="345.3" x2="1032.6" y2="373.0" stroke="#1a1a1a" stroke-width="0.9"/>
<line x1="1048.6" y1="379.8" x2="1120.6" y2="410.4" stroke="#1a1a1a" stroke-width="0.9"/>
<line x1="946.3" y1="543.6" x2="1032.6" y2="373.0" stroke="#1a1a1a" stroke-width="0.9"/>
<line x1="962.3" y1="550.4" x2="1048.6" y2="379.8" stroke="#1a1a1a" stroke-width="0.9"/>
<polygon points="864.9,424.9 874.3,428.9 969.1,241.4 959.7,237.4" fill="#989898" stroke="#000" stroke-width="1.0" stroke-linejoin="round"/>
<polygon points="956.8,243.1 1132.7,318.0 1135.6,312.3 959.7,237.4" fill="#989898" stroke="#000" stroke-width="1.0" stroke-linejoin="round"/>
<polygon points="1131.3,500.8 1137.3,503.4 1137.3,323.5 1131.3,320.9" fill="#535557" stroke="#000" stroke-width="1.0" stroke-linejoin="round"/>
<polygon points="1137.3,503.4 1143.5,491.1 1143.5,311.2 1137.3,323.5" fill="#a3a3a3" stroke="#000" stroke-width="1.0" stroke-linejoin="round"/>
<polygon points="1040.8,693.5 1131.3,514.7 1131.3,320.9 1040.8,499.8" fill="#666666" stroke="#000" stroke-width="1.0" stroke-linejoin="round"/>
<polygon points="1031.4,495.8 1040.8,499.8 1135.6,312.3 1126.2,308.3" fill="#989898" stroke="#000" stroke-width="1.0" stroke-linejoin="round"/>
<polygon points="1048.9,591.6 1135.0,421.4 1135.0,414.4 1048.9,584.7" fill="#6a6a6a" stroke="#000" stroke-width="1.0" stroke-linejoin="round"/>
<polygon points="1045.2,583.1 1048.9,584.7 1135.0,414.4 1131.3,412.8" fill="#9a9a9a" stroke="#000" stroke-width="1.0" stroke-linejoin="round"/>
<polygon points="1048.9,668.7 1135.0,498.5 1135.0,492.5 1048.9,662.8" fill="#6a6a6a" stroke="#000" stroke-width="1.0" stroke-linejoin="round"/>
<polygon points="1045.2,661.2 1048.9,662.8 1135.0,492.5 1131.3,490.9" fill="#9a9a9a" stroke="#000" stroke-width="1.0" stroke-linejoin="round"/>
<polygon points="864.9,604.8 1040.8,679.7 1040.8,499.8 864.9,424.9" fill="#2e2e2e" stroke="#000" stroke-width="1.0" stroke-linejoin="round"/>
<polygon points="864.9,424.9 1040.8,499.8 1043.7,494.1 867.8,419.2" fill="#989898" stroke="#000" stroke-width="1.0" stroke-linejoin="round"/>
<polygon points="857.0,623.7 1042.2,702.5 1042.2,684.7 857.0,605.9" fill="#2c2c2c" stroke="#000" stroke-width="1.0" stroke-linejoin="round"/>
<polygon points="1042.2,702.5 1134.5,520.0 1134.5,502.2 1042.2,684.7" fill="#6b6b6b" stroke="#000" stroke-width="1.0" stroke-linejoin="round"/>
<polygon points="857.0,605.9 1042.2,684.7 1044.0,681.0 858.9,602.2" fill="#9c9c9c" stroke="#000" stroke-width="1.0" stroke-linejoin="round"/>
<polygon points="857.0,519.8 1045.0,599.8 1046.9,596.1 858.9,516.1" fill="#a0a0a0" stroke="#000" stroke-width="1.0" stroke-linejoin="round"/>
<polygon points="857.0,605.9 877.1,614.5 877.1,434.6 857.0,426.0" fill="#535557" stroke="#000" stroke-width="1.0" stroke-linejoin="round"/>
<polygon points="960.0,649.7 980.1,658.3 980.1,478.4 960.0,469.8" fill="#535557" stroke="#000" stroke-width="1.0" stroke-linejoin="round"/>
<polygon points="1024.9,677.3 1045.0,685.9 1045.0,506.0 1024.9,497.4" fill="#535557" stroke="#000" stroke-width="1.0" stroke-linejoin="round"/>
<polygon points="1045.0,685.9 1051.2,673.6 1051.2,493.7 1045.0,506.0" fill="#a3a3a3" stroke="#000" stroke-width="1.0" stroke-linejoin="round"/>
<polygon points="857.0,535.9 1045.0,615.9 1045.0,599.8 857.0,519.8" fill="#303030" stroke="#000" stroke-width="1.0" stroke-linejoin="round"/>
<polygon points="949.3,243.5 969.4,252.0 975.6,239.8 955.5,231.2" fill="#e3e3e3" stroke="#000" stroke-width="1.0" stroke-linejoin="round"/>
<polygon points="1117.2,314.9 1137.3,323.5 1143.5,311.2 1123.4,302.6" fill="#e3e3e3" stroke="#000" stroke-width="1.0" stroke-linejoin="round"/>
<polygon points="857.0,426.0 877.1,434.6 883.3,422.3 863.2,413.7" fill="#e3e3e3" stroke="#000" stroke-width="1.0" stroke-linejoin="round"/>
<polygon points="960.0,469.8 980.1,478.4 986.3,466.1 966.2,457.6" fill="#e3e3e3" stroke="#000" stroke-width="1.0" stroke-linejoin="round"/>
<polygon points="1024.9,497.4 1045.0,506.0 1051.2,493.7 1031.1,485.2" fill="#e3e3e3" stroke="#000" stroke-width="1.0" stroke-linejoin="round"/>
<polygon points="733.2,800.1 822.2,624.1 822.2,533.1 733.2,709.2" fill="#606060" stroke="#000" stroke-width="1.0" stroke-linejoin="round"/>
<polygon points="822.2,624.1 979.3,691.0 979.3,600.0 822.2,533.1" fill="#2e2e2e" stroke="#000" stroke-width="1.0" stroke-linejoin="round"/>
<polygon points="820.7,627.0 825.4,629.0 825.4,538.0 820.7,536.0" fill="#535557" stroke="#000" stroke-width="1.0" stroke-linejoin="round"/>
<polygon points="825.4,629.0 826.9,626.1 826.9,535.1 825.4,538.0" fill="#535557" stroke="#000" stroke-width="1.0" stroke-linejoin="round"/>
<polygon points="733.2,800.1 890.3,867.0 979.3,691.0 822.2,624.1" fill="#939393" stroke="#000" stroke-width="1.0" stroke-linejoin="round"/>
<line x1="737.3" y1="801.9" x2="823.6" y2="631.3" stroke="#1a1a1a" stroke-width="0.9"/>
<line x1="823.6" y1="631.3" x2="888.6" y2="659.0" stroke="#1a1a1a" stroke-width="0.9"/>
<line x1="904.6" y1="665.8" x2="976.6" y2="696.4" stroke="#1a1a1a" stroke-width="0.9"/>
<line x1="802.3" y1="829.6" x2="888.6" y2="659.0" stroke="#1a1a1a" stroke-width="0.9"/>
<line x1="818.3" y1="836.4" x2="904.6" y2="665.8" stroke="#1a1a1a" stroke-width="0.9"/>
<line x1="779.1" y1="709.2" x2="936.3" y2="776.1" stroke="#1a1a1a" stroke-width="0.9"/>
<line x1="783.3" y1="701.0" x2="940.4" y2="767.9" stroke="#1a1a1a" stroke-width="0.9"/>
<polygon points="720.9,710.9 730.3,714.9 825.1,527.4 815.7,523.4" fill="#989898" stroke="#000" stroke-width="1.0" stroke-linejoin="round"/>
<polygon points="812.8,529.1 988.7,604.0 991.6,598.3 815.7,523.4" fill="#989898" stroke="#000" stroke-width="1.0" stroke-linejoin="round"/>
<polygon points="987.3,786.8 993.3,789.4 993.3,609.5 987.3,606.9" fill="#535557" stroke="#000" stroke-width="1.0" stroke-linejoin="round"/>
<polygon points="993.3,789.4 999.5,777.1 999.5,597.2 993.3,609.5" fill="#a3a3a3" stroke="#000" stroke-width="1.0" stroke-linejoin="round"/>
<polygon points="896.8,979.5 987.3,800.7 987.3,606.9 896.8,785.8" fill="#666666" stroke="#000" stroke-width="1.0" stroke-linejoin="round"/>
<polygon points="887.4,781.8 896.8,785.8 991.6,598.3 982.2,594.3" fill="#989898" stroke="#000" stroke-width="1.0" stroke-linejoin="round"/>
<polygon points="904.9,877.6 991.0,707.4 991.0,700.4 904.9,870.7" fill="#6a6a6a" stroke="#000" stroke-width="1.0" stroke-linejoin="round"/>
<polygon points="901.2,869.1 904.9,870.7 991.0,700.4 987.3,698.8" fill="#9a9a9a" stroke="#000" stroke-width="1.0" stroke-linejoin="round"/>
<polygon points="904.9,954.7 991.0,784.5 991.0,778.5 904.9,948.8" fill="#6a6a6a" stroke="#000" stroke-width="1.0" stroke-linejoin="round"/>
<polygon points="901.2,947.2 904.9,948.8 991.0,778.5 987.3,776.9" fill="#9a9a9a" stroke="#000" stroke-width="1.0" stroke-linejoin="round"/>
<polygon points="720.9,890.8 896.8,965.7 896.8,785.8 720.9,710.9" fill="#2e2e2e" stroke="#000" stroke-width="1.0" stroke-linejoin="round"/>
<polygon points="720.9,710.9 896.8,785.8 899.7,780.1 723.8,705.2" fill="#989898" stroke="#000" stroke-width="1.0" stroke-linejoin="round"/>
<polygon points="713.0,909.7 898.2,988.5 898.2,970.7 713.0,891.9" fill="#2c2c2c" stroke="#000" stroke-width="1.0" stroke-linejoin="round"/>
<polygon points="898.2,988.5 990.5,806.0 990.5,788.2 898.2,970.7" fill="#6b6b6b" stroke="#000" stroke-width="1.0" stroke-linejoin="round"/>
<polygon points="713.0,891.9 898.2,970.7 900.0,967.0 714.9,888.2" fill="#9c9c9c" stroke="#000" stroke-width="1.0" stroke-linejoin="round"/>
<polygon points="713.0,805.8 901.0,885.8 902.9,882.1 714.9,802.1" fill="#a0a0a0" stroke="#000" stroke-width="1.0" stroke-linejoin="round"/>
<polygon points="713.0,891.9 733.1,900.5 733.1,720.6 713.0,712.0" fill="#535557" stroke="#000" stroke-width="1.0" stroke-linejoin="round"/>
<polygon points="816.0,935.7 836.1,944.3 836.1,764.4 816.0,755.8" fill="#535557" stroke="#000" stroke-width="1.0" stroke-linejoin="round"/>
<polygon points="880.9,963.3 901.0,971.9 901.0,792.0 880.9,783.4" fill="#535557" stroke="#000" stroke-width="1.0" stroke-linejoin="round"/>
<polygon points="901.0,971.9 907.2,959.6 907.2,779.7 901.0,792.0" fill="#a3a3a3" stroke="#000" stroke-width="1.0" stroke-linejoin="round"/>
<polygon points="713.0,821.9 901.0,901.9 901.0,885.8 713.0,805.8" fill="#303030" stroke="#000" stroke-width="1.0" stroke-linejoin="round"/>
<polygon points="805.3,529.5 825.4,538.0 831.6,525.8 811.5,517.2" fill="#e3e3e3" stroke="#000" stroke-width="1.0" stroke-linejoin="round"/>
<polygon points="973.2,600.9 993.3,609.5 999.5,597.2 979.4,588.6" fill="#e3e3e3" stroke="#000" stroke-width="1.0" stroke-linejoin="round"/>
<polygon points="713.0,712.0 733.1,720.6 739.3,708.3 719.2,699.7" fill="#e3e3e3" stroke="#000" stroke-width="1.0" stroke-linejoin="round"/>
<polygon points="816.0,755.8 836.1,764.4 842.3,752.1 822.2,743.6" fill="#e3e3e3" stroke="#000" stroke-width="1.0" stroke-linejoin="round"/>
<polygon points="880.9,783.4 901.0,792.0 907.2,779.7 887.1,771.2" fill="#e3e3e3" stroke="#000" stroke-width="1.0" stroke-linejoin="round"/>
</g></svg><!--/BOXES-->
<!-- view cube -->
<svg class="a" style="left:1440px;top:160px" width="180" height="180" viewBox="1440 160 180 180">
<defs><radialGradient id="shd" cx="0.5" cy="0.5" r="0.5"><stop offset="0" stop-color="#8a8a8a" stop-opacity="0.9"/><stop offset="1" stop-color="#fafafa" stop-opacity="0"/></radialGradient></defs>
<path d="M1470 182 l7 -6 l7 6 v6 h-14z" fill="#eee" stroke="#777" stroke-width="1"/><rect x="1475" y="183" width="4" height="5" fill="#666"/>
<path fill-rule="evenodd" d="M1461 270 a61.8 57.8 0 1 0 123.6 0 a61.8 57.8 0 1 0 -123.6 0z M1475.5 270 a47.5 43 0 1 0 95 0 a47.5 43 0 1 0 -95 0z" fill="#ebebeb" stroke="#9c9c9c" stroke-width="1"/>
<ellipse cx="1528" cy="278" rx="34" ry="24" fill="url(#shd)"/>
<polygon points="1489,257.3 1490.3,271.3 1535,292.2 1537.8,276" fill="#efefef" stroke="#777" stroke-width="0.8"/>
<polygon points="1537.8,276 1535,292.2 1553,251 1556,236.3" fill="#e2e2e2" stroke="#777" stroke-width="0.8"/>
<polygon points="1511.3,216.8 1556,236.3 1537.8,276 1489,257.3" fill="#f2f2f2" stroke="#777" stroke-width="0.8"/>
<polygon points="1513,225 1544,239 1530,268 1499,255" fill="#d2d7dc"/>
<path d="M1513 243 l18 7 M1524 239 l-8 18 M1535 240 l-10 22" stroke="#555" stroke-width="0.9" fill="none"/>
<g font-size="13" fill="#2a2a2a" font-weight="bold" stroke="#f0f0f0" stroke-width="0.6" paint-order="stroke">
<text x="1539" y="226" transform="rotate(30 1546 221)">北</text>
<text x="1467" y="250" transform="rotate(-40 1474 245)">西</text>
<text x="1571" y="296" transform="rotate(40 1578 291)">东</text>
<text x="1493" y="323" transform="rotate(-25 1500 318)">南</text>
</g>
<path d="M1593 307 h11 l-5.5 6z" fill="#ddd" stroke="#888" stroke-width="0.8"/><line x1="1593" y1="305.5" x2="1604" y2="305.5" stroke="#777"/>
</svg>
<!-- nav bar -->
<div class="a" style="left:1577px;top:337px;width:35px;height:117px;border:1px solid #c6c6c6;border-radius:6px;background:#f1eff3"></div>
<svg class="a" style="left:1577px;top:337px" width="36" height="118">
<circle cx="27.5" cy="7" r="4" fill="#ddd" stroke="#999" stroke-width="0.8"/><path d="M25.5 5 l4 4 M29.5 5 l-4 4" stroke="#777" stroke-width="0.8"/>
<circle cx="18" cy="31" r="11" fill="#f4f4f4" stroke="#999" stroke-width="1.2"/><circle cx="18" cy="31" r="6" fill="#e6eaee" stroke="#888" stroke-width="1"/><path d="M9 26 l5 3 M27 26 l-5 3 M18 42 v-5" stroke="#888" stroke-width="1"/>
<path d="M15 51 h6 l-3 3z" fill="#777"/>
<line x1="3" y1="58.5" x2="32" y2="58.5" stroke="#ccc"/>
<rect x="10" y="67" width="10.5" height="10.5" fill="#a6d39a" stroke="#8aa88a" stroke-width="0.6"/><circle cx="22" cy="78" r="3.2" fill="#fff" stroke="#555" stroke-width="1"/><line x1="24.2" y1="80.2" x2="27" y2="83" stroke="#555" stroke-width="1.3"/>
<path d="M15 93 h6 l-3 3z" fill="#777"/>
<circle cx="27.5" cy="109" r="4" fill="#ddd" stroke="#999" stroke-width="0.8"/><line x1="25" y1="109" x2="30" y2="109" stroke="#777"/>
</svg>
<!-- right scrollbar -->
<div class="a" style="left:1614px;top:164px;width:17px;height:805px;background:#f1eff4"></div>
<svg class="a" style="left:1616px;top:170px" width="12" height="8"><path d="M1.5 6.5 l4.5 -4.5 l4.5 4.5" fill="none" stroke="#333" stroke-width="1.6"/></svg>
<svg class="a" style="left:1616px;top:956px" width="12" height="8"><path d="M1.5 1.5 l4.5 4.5 l4.5 -4.5" fill="none" stroke="#333" stroke-width="1.6"/></svg>
<div class="a" style="left:1615px;top:558px;width:14px;height:18px;background:#cacaca"></div>
<!-- view control bar -->
<div class="a" style="left:242px;top:969px;width:1389px;height:18px;background:#f1eff4;border-top:1px solid #e0dce6"></div>
<div class="a" style="left:1104px;top:970px;width:18px;height:16px;background:#cacaca"></div>
<svg class="a" style="left:618px;top:970px" width="10" height="12"><path d="M7 2 l-4 4 l4 4" fill="none" stroke="#333" stroke-width="1.6"/></svg>
<svg class="a" style="left:1600px;top:971px" width="10" height="12"><path d="M3 2 l4 4 l-4 4" fill="none" stroke="#333" stroke-width="1.6"/></svg>
<div class="a" style="left:265px;top:968px;line-height:16px;font-size:11px;color:#222;word-spacing:4px">1 : 100</div>
<svg class="a" style="left:0;top:967px" width="620" height="18"><g transform="translate(324,0)"><rect x="0.5" y="3.5" width="16" height="11" fill="#ddd" stroke="#333"/><rect x="3" y="6" width="5" height="3" fill="#555"/><rect x="9" y="9" width="5" height="3" fill="#555"/></g><g transform="translate(345,0)"><path d="M1 7 l4 -3 h11 v9 l-4 3 h-11z" fill="#9bd0f0" stroke="#2a6db0"/><path d="M1 7 h11 l4 -3 M12 7 v9" fill="none" stroke="#2a6db0"/></g><g transform="translate(365,0)"><circle cx="6" cy="7" r="3.5" fill="#f6c700"/><path d="M6 1 v2 M0 7 h2 M2 3 l1.3 1.3 M10 3 l-1.3 1.3" stroke="#e0a800"/><path d="M8 10 l6 6 M14 10 l-6 6" stroke="#d11" stroke-width="2"/></g><g transform="translate(387,0)"><circle cx="6" cy="7" r="4" fill="#fff" stroke="#2a6db0"/><path d="M1 13 h7" stroke="#333"/><path d="M8 10 l6 6 M14 10 l-6 6" stroke="#d11" stroke-width="2"/></g><g transform="translate(407,0)"><path d="M1 6 l5 -2 l5 3 v6 l-5 2 l-5 -3z" fill="#ddd" stroke="#444"/><circle cx="13" cy="11" r="3" fill="#fff" stroke="#2a6db0"/></g><g transform="translate(428,0)"><path d="M1 7 h12 v8 h-12z" fill="none" stroke="#2a6db0"/><path d="M4 4 h11" stroke="#333"/><path d="M8 9 l6 6 M14 9 l-6 6" stroke="#d11" stroke-width="2"/></g><g transform="translate(449,0)"><path d="M1 7 h10 v8 h-10z" fill="none" stroke="#2a6db0"/><path d="M3 4 h9" stroke="#333"/><circle cx="13" cy="11" r="3" fill="#fff" stroke="#2a6db0"/></g><g transform="translate(469,0)"><path d="M1 9 l7 -6 l7 6 v7 h-14z" fill="#eee" stroke="#444"/><rect x="8" y="10" width="6" height="6" fill="#ccc" stroke="#2a8"/></g><g transform="translate(490,0)"><path d="M1 10 q6 -6 12 0 q-6 6 -12 0z M10 8 l6 -4" fill="none" stroke="#444"/></g><g transform="translate(515,0)"><circle cx="5" cy="8" r="3" fill="#9bd0f0" stroke="#2a6db0"/><line x1="5" y1="11" x2="5" y2="15" stroke="#555"/></g><g transform="translate(532,0)"><path d="M1 5 h14 v10 h-14z" fill="none" stroke="#333" stroke-dasharray="2 1"/><rect x="9" y="9" width="6" height="6" fill="#ccc" stroke="#555"/></g><g transform="translate(553,0)"><path d="M1 6 l5 -3 l8 2 v10 h-13z" fill="none" stroke="#444"/><rect x="1" y="9" width="3" height="6" fill="#d22"/><circle cx="13" cy="8" r="3" fill="#f6c700"/></g><g transform="translate(574,0)"><path d="M1 7 l5 -3 h9 v9 l-5 3 h-9z" fill="#ddd" stroke="#444"/><path d="M1 7 h9 v9 M10 7 l5 -3" fill="none" stroke="#444"/></g><g transform="translate(595,0)"><path d="M1 4 h15 M1 2 v4 M16 2 v4 M1 9 v6 h4" fill="none" stroke="#333" stroke-dasharray="2 1"/><rect x="9" y="9" width="6" height="6" fill="#ccc" stroke="#555"/></g></svg>
<svg class="a" style="left:628px;top:969px" width="0" height="0"></svg>
<!-- dialog -->
<div class="a" style="left:249px;top:169px;width:186px;height:93px;background:#fbfbfb;border:1px solid #b5b5b5;box-shadow:1px 1px 3px rgba(0,0,0,0.25)"></div>
<svg class="a" style="left:259px;top:176px" width="15" height="16"><rect x="0" y="0" width="14" height="16" rx="2" fill="#1f5fc8"/><rect x="0" y="11" width="14" height="5" fill="#123a80"/><text x="3" y="10" font-family="Liberation Sans" font-weight="bold" font-size="9" fill="#fff">R</text></svg>
<div class="a" style="left:279px;top:176px;line-height:16px;color:#999;font-size:12px">S...</div>
<div class="a" style="left:315px;top:184px;width:10px;height:1px;background:#888"></div>
<div class="a" style="left:360px;top:179px;width:10px;height:10px;border:1px solid #555"></div>
<svg class="a" style="left:405px;top:178px" width="12" height="12"><path d="M1 1 L11 11 M11 1 L1 11" stroke="#555" stroke-width="1"/></svg>
<div class="a dbtn" style="left:252px;top:202px;width:180px;height:22px">精装出图顺序</div>
<div class="a dbtn" style="left:252px;top:228px;width:88px;height:22px;letter-spacing:-0.3px">建筑结构顺序</div>
<div class="a dbtn" style="left:344px;top:228px;width:88px;height:22px">框选结构</div>
<!-- browser -->
<div class="a" style="left:1632px;top:143px;width:212px;height:844px;background:#fbfbfb"></div>
<div class="a" style="left:1632px;top:143px;width:2px;height:844px;background:#d6d6d6"></div>
<div class="a" style="left:1634px;top:143px;width:210px;height:21px;background:#f1eff4"></div>
<div class="a" style="left:1638px;top:145px;line-height:16px;color:#222">项目浏览器 - 结构顺序</div>
<div class="dv" style="left:1644px;top:182px;height:790px"></div>
<div class="dv" style="left:1664px;top:182px;height:292px"></div>
<div class="dv" style="left:1684px;top:196px;height:37px"></div>
<div class="dv" style="left:1684px;top:256px;height:37px"></div>
<div class="dv" style="left:1684px;top:316px;height:37px"></div>
<div class="dv" style="left:1684px;top:376px;height:77px"></div>
<div class="dv" style="left:1684px;top:476px;height:77px"></div>

<div class="dv" style="left:1664px;top:642px;height:333px"></div>
<div class="tb" style="left:1640px;top:170px"><i class="h"></i></div>
<svg class="a" style="left:1657px;top:166px" width="15" height="15"><path d="M0.5 4 v-3.5 h3.5 M11 0.5 h3.5 v3.5 M14.5 11 v3.5 h-3.5 M4 14.5 h-3.5 v-3.5" fill="none" stroke="#444" stroke-width="1.2"/><path d="M5 4.5 h5 v6 h-5z" fill="none" stroke="#444" stroke-width="1.1"/></svg>
<div class="dh" style="left:1649px;top:174px;width:7px"></div>
<div class="tt" style="left:1678px;top:166px">视图 (全部)</div>
<div class="tb" style="left:1660px;top:190px"><i class="h"></i></div>
<div class="dh" style="left:1670px;top:194px;width:10px"></div>
<div class="tt" style="left:1682px;top:186px">楼层平面</div>
<div class="dh" style="left:1685px;top:214px;width:10px"></div>
<svg class="a" style="left:1696px;top:204px" width="16" height="16"><rect x="0.5" y="0.5" width="15" height="15" fill="#fafafa" stroke="#666" stroke-dasharray="1.5 1"/><rect x="2.5" y="2.5" width="11" height="11" fill="#f2f2f2" stroke="#555"/></svg>
<div class="tt" style="left:1718px;top:206px">F1</div>
<div class="dh" style="left:1685px;top:234px;width:10px"></div>
<svg class="a" style="left:1696px;top:224px" width="16" height="16"><rect x="0.5" y="0.5" width="15" height="15" fill="#fafafa" stroke="#666" stroke-dasharray="1.5 1"/><rect x="2.5" y="2.5" width="11" height="11" fill="#f2f2f2" stroke="#555"/></svg>
<div class="tt" style="left:1718px;top:226px;background:#dedede;padding:0 1px;margin-left:-1px">F2</div>
<div class="tb" style="left:1660px;top:250px"><i class="h"></i></div>
<div class="dh" style="left:1670px;top:254px;width:10px"></div>
<div class="tt" style="left:1682px;top:246px">天花板平面</div>
<div class="dh" style="left:1685px;top:274px;width:10px"></div>
<svg class="a" style="left:1696px;top:264px" width="16" height="16"><rect x="0.5" y="0.5" width="15" height="15" fill="#fafafa" stroke="#666" stroke-dasharray="1.5 1"/><rect x="2.5" y="2.5" width="11" height="11" fill="#f2f2f2" stroke="#555"/></svg>
<div class="tt" style="left:1718px;top:266px">F1</div>
<div class="dh" style="left:1685px;top:294px;width:10px"></div>
<svg class="a" style="left:1696px;top:284px" width="16" height="16"><rect x="0.5" y="0.5" width="15" height="15" fill="#fafafa" stroke="#666" stroke-dasharray="1.5 1"/><rect x="2.5" y="2.5" width="11" height="11" fill="#f2f2f2" stroke="#555"/></svg>
<div class="tt" style="left:1718px;top:286px">F2</div>
<div class="tb" style="left:1660px;top:310px"><i class="h"></i></div>
<div class="dh" style="left:1670px;top:314px;width:10px"></div>
<div class="tt" style="left:1682px;top:306px">三维视图</div>
<div class="dh" style="left:1685px;top:334px;width:10px"></div>
<svg class="a" style="left:1696px;top:324px" width="16" height="16"><rect x="0.5" y="0.5" width="15" height="15" fill="#fafafa" stroke="#666" stroke-dasharray="1.5 1"/><rect x="2.5" y="2.5" width="11" height="11" fill="#f2f2f2" stroke="#555"/></svg>
<div class="tt" style="left:1718px;top:326px;font-weight:bold">{三维}</div>
<div class="dh" style="left:1685px;top:354px;width:10px"></div>
<svg class="a" style="left:1696px;top:344px" width="16" height="16"><rect x="0.5" y="0.5" width="15" height="15" fill="#fafafa" stroke="#666" stroke-dasharray="1.5 1"/><rect x="2.5" y="2.5" width="11" height="11" fill="#f2f2f2" stroke="#555"/></svg>
<div class="tt" style="left:1718px;top:346px">轻量化视图</div>
<div class="tb" style="left:1660px;top:370px"><i class="h"></i></div>
<div class="dh" style="left:1670px;top:374px;width:10px"></div>
<div class="tt" style="left:1682px;top:366px">立面 (建筑立面)</div>
<div class="dh" style="left:1685px;top:394px;width:10px"></div>
<svg class="a" style="left:1696px;top:384px" width="16" height="16"><rect x="0.5" y="0.5" width="15" height="15" fill="#fafafa" stroke="#666" stroke-dasharray="1.5 1"/><rect x="2.5" y="2.5" width="11" height="11" fill="#f2f2f2" stroke="#555"/></svg>
<div class="tt" style="left:1718px;top:386px">东</div>
<div class="dh" style="left:1685px;top:414px;width:10px"></div>
<svg class="a" style="left:1696px;top:404px" width="16" height="16"><rect x="0.5" y="0.5" width="15" height="15" fill="#fafafa" stroke="#666" stroke-dasharray="1.5 1"/><rect x="2.5" y="2.5" width="11" height="11" fill="#f2f2f2" stroke="#555"/></svg>
<div class="tt" style="left:1718px;top:406px">北</div>
<div class="dh" style="left:1685px;top:434px;width:10px"></div>
<svg class="a" style="left:1696px;top:424px" width="16" height="16"><rect x="0.5" y="0.5" width="15" height="15" fill="#fafafa" stroke="#666" stroke-dasharray="1.5 1"/><rect x="2.5" y="2.5" width="11" height="11" fill="#f2f2f2" stroke="#555"/></svg>
<div class="tt" style="left:1718px;top:426px">南</div>
<div class="dh" style="left:1685px;top:454px;width:10px"></div>
<svg class="a" style="left:1696px;top:444px" width="16" height="16"><rect x="0.5" y="0.5" width="15" height="15" fill="#fafafa" stroke="#666" stroke-dasharray="1.5 1"/><rect x="2.5" y="2.5" width="11" height="11" fill="#f2f2f2" stroke="#555"/></svg>
<div class="tt" style="left:1718px;top:446px">西</div>
<div class="tb" style="left:1660px;top:470px"><i class="h"></i></div>
<div class="dh" style="left:1670px;top:474px;width:10px"></div>
<div class="tt" style="left:1682px;top:466px">绘图视图 (详图)</div>
<div class="dh" style="left:1685px;top:494px;width:10px"></div>
<svg class="a" style="left:1696px;top:484px" width="16" height="16"><rect x="0.5" y="0.5" width="15" height="15" fill="#fafafa" stroke="#666" stroke-dasharray="1.5 1"/><rect x="2.5" y="2.5" width="11" height="11" fill="#5aaae6"/></svg>
<div class="tt" style="left:1718px;top:486px">A2施工说明一</div>
<div class="dh" style="left:1685px;top:514px;width:10px"></div>
<svg class="a" style="left:1696px;top:504px" width="16" height="16"><rect x="0.5" y="0.5" width="15" height="15" fill="#fafafa" stroke="#666" stroke-dasharray="1.5 1"/><rect x="2.5" y="2.5" width="11" height="11" fill="#5aaae6"/></svg>
<div class="tt" style="left:1718px;top:506px">A2施工说明三</div>
<div class="dh" style="left:1685px;top:534px;width:10px"></div>
<svg class="a" style="left:1696px;top:524px" width="16" height="16"><rect x="0.5" y="0.5" width="15" height="15" fill="#fafafa" stroke="#666" stroke-dasharray="1.5 1"/><rect x="2.5" y="2.5" width="11" height="11" fill="#5aaae6"/></svg>
<div class="tt" style="left:1718px;top:526px">A2施工说明二</div>
<div class="dh" style="left:1685px;top:554px;width:10px"></div>
<svg class="a" style="left:1696px;top:544px" width="16" height="16"><rect x="0.5" y="0.5" width="15" height="15" fill="#fafafa" stroke="#666" stroke-dasharray="1.5 1"/><rect x="2.5" y="2.5" width="11" height="11" fill="#f2f2f2" stroke="#555"/></svg>
<div class="tt" style="left:1718px;top:546px">材料构造做法表</div>
<div class="tb" style="left:1640px;top:570px"><i class="h"></i><i class="v"></i></div>
<svg class="a" style="left:1656px;top:565px" width="17" height="16"><rect x="0.5" y="0.5" width="16" height="15" rx="1" fill="#f4f4f4" stroke="#555"/><rect x="0.5" y="0.5" width="16" height="3" fill="#666"/><rect x="3" y="6" width="3" height="2" fill="#555"/><rect x="3" y="10" width="3" height="2" fill="#555"/><path d="M8 7 h6 M8 11 h6" stroke="#777"/></svg>
<div class="dh" style="left:1649px;top:574px;width:7px"></div>
<div class="tt" style="left:1678px;top:566px">图例</div>
<div class="tb" style="left:1640px;top:590px"><i class="h"></i><i class="v"></i></div>
<svg class="a" style="left:1656px;top:585px" width="17" height="16"><rect x="0.5" y="1.5" width="16" height="13" fill="#f4f4f4" stroke="#555"/><path d="M0.5 5 h16 M0.5 8.5 h16 M0.5 11.5 h16 M5 1.5 v13" stroke="#888"/><rect x="0.5" y="1.5" width="16" height="3" fill="#666"/></svg>
<div class="dh" style="left:1649px;top:594px;width:7px"></div>
<div class="tt" style="left:1678px;top:586px">明细表/数量 (全部)</div>
<div class="tb" style="left:1640px;top:610px"><i class="h"></i><i class="v"></i></div>
<svg class="a" style="left:1656px;top:605px" width="17" height="16"><path d="M0.5 0.5 h12 l4 4 v11 h-16z" fill="#f4f4f4" stroke="#555"/><path d="M3 13 v-6 h6 v6 M5 13 v-4 h2" fill="none" stroke="#777"/></svg>
<div class="dh" style="left:1649px;top:614px;width:7px"></div>
<div class="tt" style="left:1678px;top:606px">图纸 (全部)</div>
<div class="tb" style="left:1640px;top:630px"><i class="h"></i></div>
<svg class="a" style="left:1657px;top:625px" width="16" height="16"><path d="M0.5 0.5 h7 v7 h-7z M9.5 0.5 h5 v15 h-14 v-6 h9z" fill="#f4f4f4" stroke="#555"/></svg>
<div class="dh" style="left:1649px;top:634px;width:7px"></div>
<div class="tt" style="left:1678px;top:626px">族</div>
<div class="tb" style="left:1660px;top:650px"><i class="h"></i><i class="v"></i></div>
<div class="dh" style="left:1670px;top:654px;width:10px"></div>
<div class="tt" style="left:1682px;top:646px">分析链接</div>
<div class="tb" style="left:1660px;top:670px"><i class="h"></i><i class="v"></i></div>
<div class="dh" style="left:1670px;top:674px;width:10px"></div>
<div class="tt" style="left:1682px;top:666px">坡道</div>
<div class="tb" style="left:1660px;top:690px"><i class="h"></i><i class="v"></i></div>
<div class="dh" style="left:1670px;top:694px;width:10px"></div>
<div class="tt" style="left:1682px;top:686px">填充图案</div>
<div class="tb" style="left:1660px;top:710px"><i class="h"></i><i class="v"></i></div>
<div class="dh" style="left:1670px;top:714px;width:10px"></div>
<div class="tt" style="left:1682px;top:706px">墙</div>
<div class="tb" style="left:1660px;top:730px"><i class="h"></i><i class="v"></i></div>
<div class="dh" style="left:1670px;top:734px;width:10px"></div>
<div class="tt" style="left:1682px;top:726px">天花板</div>
<div class="tb" style="left:1660px;top:750px"><i class="h"></i><i class="v"></i></div>
<div class="dh" style="left:1670px;top:754px;width:10px"></div>
<div class="tt" style="left:1682px;top:746px">屋顶</div>
<div class="tb" style="left:1660px;top:770px"><i class="h"></i><i class="v"></i></div>
<div class="dh" style="left:1670px;top:774px;width:10px"></div>
<div class="tt" style="left:1682px;top:766px">幕墙嵌板</div>
<div class="tb" style="left:1660px;top:790px"><i class="h"></i><i class="v"></i></div>
<div class="dh" style="left:1670px;top:794px;width:10px"></div>
<div class="tt" style="left:1682px;top:786px">幕墙竖梃</div>
<div class="tb" style="left:1660px;top:810px"><i class="h"></i><i class="v"></i></div>
<div class="dh" style="left:1670px;top:814px;width:10px"></div>
<div class="tt" style="left:1682px;top:806px">幕墙系统</div>
<div class="tb" style="left:1660px;top:830px"><i class="h"></i><i class="v"></i></div>
<div class="dh" style="left:1670px;top:834px;width:10px"></div>
<div class="tt" style="left:1682px;top:826px">栏杆扶手</div>
<div class="tb" style="left:1660px;top:850px"><i class="h"></i><i class="v"></i></div>
<div class="dh" style="left:1670px;top:854px;width:10px"></div>
<div class="tt" style="left:1682px;top:846px">楼板</div>
<div class="tb" style="left:1660px;top:870px"><i class="h"></i><i class="v"></i></div>
<div class="dh" style="left:1670px;top:874px;width:10px"></div>
<div class="tt" style="left:1682px;top:866px">楼梯</div>
<div class="tb" style="left:1660px;top:890px"><i class="h"></i><i class="v"></i></div>
<div class="dh" style="left:1670px;top:894px;width:10px"></div>
<div class="tt" style="left:1682px;top:886px">注释符号</div>
<div class="tb" style="left:1660px;top:910px"><i class="h"></i><i class="v"></i></div>
<div class="dh" style="left:1670px;top:914px;width:10px"></div>
<div class="tt" style="left:1682px;top:906px">电缆桥架</div>
<div class="tb" style="left:1660px;top:930px"><i class="h"></i><i class="v"></i></div>
<div class="dh" style="left:1670px;top:934px;width:10px"></div>
<div class="tt" style="left:1682px;top:926px">窗</div>
<div class="tb" style="left:1660px;top:950px"><i class="h"></i><i class="v"></i></div>
<div class="dh" style="left:1670px;top:954px;width:10px"></div>
<div class="tt" style="left:1682px;top:946px">管道</div>
<div class="tb" style="left:1660px;top:970px"><i class="h"></i><i class="v"></i></div>
<div class="dh" style="left:1670px;top:974px;width:10px"></div>
<div class="tt" style="left:1682px;top:966px">管道系统</div>
<!-- status -->
<div class="a" style="left:0;top:987px;width:1844px;height:15px;background:#cbcbcb;overflow:hidden">
 <div class="a" style="left:-2px;top:4px;line-height:16px;font-size:12px;color:#222;letter-spacing:0.12px">单击可进行选择; 按 Tab 键并单击可选择其他项目; 按 Ctrl 键并单击可将新项目添加到选择集; 按 Shift 键并单击可取消选择。</div>
 <svg class="a" style="left:938px;top:4px" width="18" height="12"><rect x="6" y="1" width="6" height="9" fill="#3a9a3a"/><rect x="1" y="7" width="7" height="5" fill="#2a70c0"/><circle cx="13" cy="9" r="3" fill="#fff" stroke="#2a70c0"/></svg>
 <div class="a" style="left:963px;top:4px;width:204px;height:14px;background:#fbfbfb"></div>
 <svg class="a" style="left:1155px;top:10px" width="10" height="6"><path d="M1 1 l4 4 l4 -4" fill="none" stroke="#666" stroke-width="1.1"/></svg>
 <svg class="a" style="left:1178px;top:4px" width="16" height="12"><path d="M2 1 h10 l-3 4 h-5 l-2 6" fill="none" stroke="#888" stroke-width="1.2"/></svg>
 <div class="a" style="left:1197px;top:3px;line-height:16px;color:#222">:0</div>
 <svg class="a" style="left:1229px;top:4px" width="17" height="12"><rect x="0.5" y="0.5" width="15" height="12" fill="#f4f4f4" stroke="#333"/><rect x="0.5" y="0.5" width="15" height="2" fill="#333"/><rect x="3" y="5" width="2" height="2" fill="#333"/><path d="M7 6 h6 M3 9 h10" stroke="#333"/></svg>
 <div class="a" style="left:1256px;top:4px;width:14px;height:11px;background:#9a9a9a"></div>
 <div class="a" style="left:1279px;top:4px;width:204px;height:14px;background:#fbfbfb"></div>
 <div class="a" style="left:1282px;top:4px;line-height:16px;color:#777">主模型</div>
 <svg class="a" style="left:1472px;top:10px" width="10" height="6"><path d="M1 1 l4 4 l4 -4" fill="none" stroke="#666" stroke-width="1.1"/></svg>
 <svg class="a" style="left:1660px;top:2px" width="184" height="14">
  <path d="M3 8 a4 3 0 1 1 7 0 a4 3 0 1 1 -7 0z M10 8 a4 3 0 1 1 7 0 a4 3 0 1 1 -7 0z" fill="none" stroke="#d4a000" stroke-width="1.8"/><path d="M9 6 l4 4 l-2 0 l1 3" fill="#fff" stroke="#222" stroke-width="0.7"/>
  <path d="M30 10 l7 -7 h7 l-3 4 l-3 -1 l-5 5z" fill="#bfe3f7" stroke="#2a70c0" stroke-width="1.1"/><path d="M37 6 l4 4 l-2 0 l1 3" fill="#fff" stroke="#222" stroke-width="0.7"/>
  <rect x="57" y="3" width="7" height="11" fill="#f0a060" stroke="#d05020"/><path d="M64 6 l4 4 l-2 0 l1 3" fill="#fff" stroke="#222" stroke-width="0.7"/>
  <path d="M82 5 l7 -3 v12 h-7z" fill="#a8d0ee" stroke="#2a70c0"/><path d="M89 6 l4 4 l-2 0 l1 3" fill="#fff" stroke="#222" stroke-width="0.7"/>
  <path d="M108 7 h10 M113 2 v10" stroke="#222" stroke-width="1.6"/><path d="M116 6 l4 4 l-2 0 l1 3" fill="#fff" stroke="#222" stroke-width="0.7"/>
  <circle cx="136" cy="9" r="4.5" fill="none" stroke="#aaa" stroke-width="2" stroke-dasharray="2 1"/>
  <path d="M153 4 h15 l-5 6 v4 h-5 v-4z" fill="#ddd" stroke="#666"/><text x="170" y="14" font-size="11" font-family="Liberation Sans" fill="#222">:0</text>
 </svg>
</div>
<!-- cursor -->
<svg class="a" style="left:1217px;top:202px" width="14" height="22"><path d="M1 1 v15 l3.5 -3.5 l3 6.5 l2.5 -1 l-3 -6.5 h5z" fill="#fff" stroke="#222" stroke-width="1"/></svg>
</body></html>
